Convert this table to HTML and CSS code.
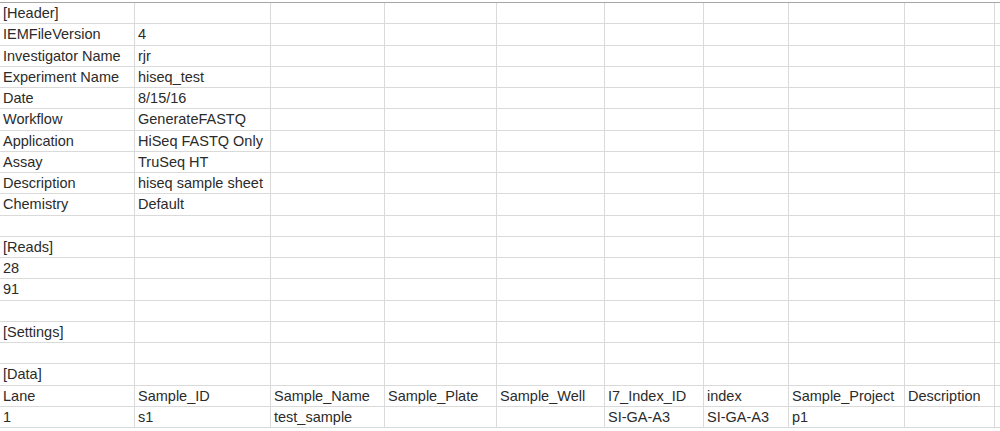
FILE: index.html
```html
<!DOCTYPE html>
<html>
<head>
<meta charset="utf-8">
<link rel="stylesheet" href="styles.css">
</head>
<body>
<div class="sheet">
  <div class="row"><div class="c">[Header]</div><div class="c"></div><div class="c"></div><div class="c"></div><div class="c"></div><div class="c"></div><div class="c"></div><div class="c"></div><div class="c"></div><div class="c"></div></div>
  <div class="row"><div class="c">IEMFileVersion</div><div class="c">4</div><div class="c"></div><div class="c"></div><div class="c"></div><div class="c"></div><div class="c"></div><div class="c"></div><div class="c"></div><div class="c"></div></div>
  <div class="row"><div class="c">Investigator Name</div><div class="c">rjr</div><div class="c"></div><div class="c"></div><div class="c"></div><div class="c"></div><div class="c"></div><div class="c"></div><div class="c"></div><div class="c"></div></div>
  <div class="row"><div class="c">Experiment Name</div><div class="c">hiseq_test</div><div class="c"></div><div class="c"></div><div class="c"></div><div class="c"></div><div class="c"></div><div class="c"></div><div class="c"></div><div class="c"></div></div>
  <div class="row"><div class="c">Date</div><div class="c">8/15/16</div><div class="c"></div><div class="c"></div><div class="c"></div><div class="c"></div><div class="c"></div><div class="c"></div><div class="c"></div><div class="c"></div></div>
  <div class="row"><div class="c">Workflow</div><div class="c">GenerateFASTQ</div><div class="c"></div><div class="c"></div><div class="c"></div><div class="c"></div><div class="c"></div><div class="c"></div><div class="c"></div><div class="c"></div></div>
  <div class="row"><div class="c">Application</div><div class="c">HiSeq FASTQ Only</div><div class="c"></div><div class="c"></div><div class="c"></div><div class="c"></div><div class="c"></div><div class="c"></div><div class="c"></div><div class="c"></div></div>
  <div class="row"><div class="c">Assay</div><div class="c">TruSeq HT</div><div class="c"></div><div class="c"></div><div class="c"></div><div class="c"></div><div class="c"></div><div class="c"></div><div class="c"></div><div class="c"></div></div>
  <div class="row"><div class="c">Description</div><div class="c">hiseq sample sheet</div><div class="c"></div><div class="c"></div><div class="c"></div><div class="c"></div><div class="c"></div><div class="c"></div><div class="c"></div><div class="c"></div></div>
  <div class="row"><div class="c">Chemistry</div><div class="c">Default</div><div class="c"></div><div class="c"></div><div class="c"></div><div class="c"></div><div class="c"></div><div class="c"></div><div class="c"></div><div class="c"></div></div>
  <div class="row"><div class="c"></div><div class="c"></div><div class="c"></div><div class="c"></div><div class="c"></div><div class="c"></div><div class="c"></div><div class="c"></div><div class="c"></div><div class="c"></div></div>
  <div class="row"><div class="c">[Reads]</div><div class="c"></div><div class="c"></div><div class="c"></div><div class="c"></div><div class="c"></div><div class="c"></div><div class="c"></div><div class="c"></div><div class="c"></div></div>
  <div class="row"><div class="c">28</div><div class="c"></div><div class="c"></div><div class="c"></div><div class="c"></div><div class="c"></div><div class="c"></div><div class="c"></div><div class="c"></div><div class="c"></div></div>
  <div class="row"><div class="c">91</div><div class="c"></div><div class="c"></div><div class="c"></div><div class="c"></div><div class="c"></div><div class="c"></div><div class="c"></div><div class="c"></div><div class="c"></div></div>
  <div class="row"><div class="c"></div><div class="c"></div><div class="c"></div><div class="c"></div><div class="c"></div><div class="c"></div><div class="c"></div><div class="c"></div><div class="c"></div><div class="c"></div></div>
  <div class="row"><div class="c">[Settings]</div><div class="c"></div><div class="c"></div><div class="c"></div><div class="c"></div><div class="c"></div><div class="c"></div><div class="c"></div><div class="c"></div><div class="c"></div></div>
  <div class="row"><div class="c"></div><div class="c"></div><div class="c"></div><div class="c"></div><div class="c"></div><div class="c"></div><div class="c"></div><div class="c"></div><div class="c"></div><div class="c"></div></div>
  <div class="row"><div class="c">[Data]</div><div class="c"></div><div class="c"></div><div class="c"></div><div class="c"></div><div class="c"></div><div class="c"></div><div class="c"></div><div class="c"></div><div class="c"></div></div>
  <div class="row"><div class="c">Lane</div><div class="c">Sample_ID</div><div class="c">Sample_Name</div><div class="c">Sample_Plate</div><div class="c">Sample_Well</div><div class="c">I7_Index_ID</div><div class="c">index</div><div class="c">Sample_Project</div><div class="c">Description</div><div class="c"></div></div>
  <div class="row"><div class="c">1</div><div class="c">s1</div><div class="c">test_sample</div><div class="c"></div><div class="c"></div><div class="c">SI-GA-A3</div><div class="c">SI-GA-A3</div><div class="c">p1</div><div class="c"></div><div class="c"></div></div>
</div>
</body>
</html>
```
FILE: styles.css
```css
html, body {
  margin: 0;
  padding: 0;
  background: #ffffff;
}
body {
  width: 1000px;
  height: 431px;
  overflow: hidden;
  padding-top: 2px;
}
.sheet {
  border-top: 1px solid #a6a6a6;
  font-family: "Liberation Sans", Arial, sans-serif;
  font-size: 14.5px;
  color: #2b2b2b;
  width: 1010px;
}
.row {
  display: grid;
  grid-template-columns: 135px 136px 114px 112px 108px 99px 85px 116px 90px 15px;
  height: 21.25px;
  box-sizing: border-box;
  border-bottom: 1px solid #dadada;
}
.c {
  box-sizing: border-box;
  border-right: 1px solid #dadada;
  padding: 2px 0 0 3px;
  line-height: 17px;
  white-space: nowrap;
  overflow: hidden;
}
```
